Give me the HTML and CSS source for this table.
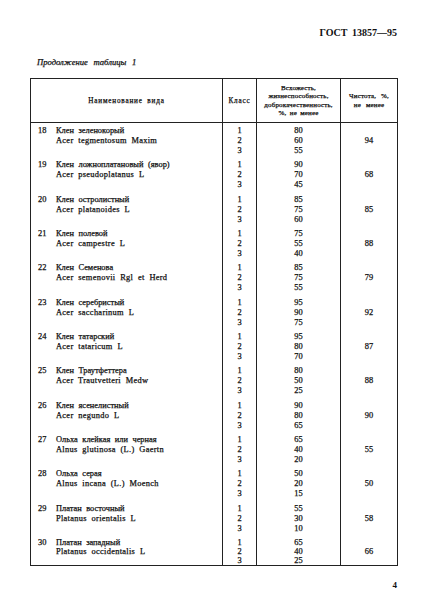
FILE: index.html
```html
<!DOCTYPE html>
<html lang="ru">
<head>
<meta charset="utf-8">
<title>ГОСТ 13857—95</title>
<link rel="stylesheet" href="styles.css">
</head>
<body>
<div class="page">
  <div class="gost">ГОСТ 13857—95</div>
  <div class="caption">Продолжение таблицы 1</div>
  <table class="tbl">
    <colgroup>
      <col class="c-name"><col class="c-cls"><col class="c-val"><col class="c-pur">
    </colgroup>
    <thead>
      <tr>
        <th class="th-wide">Наименование вида</th>
        <th class="th-wide">Класс</th>
        <th class="th-multi">Всхожесть,<br>жизнеспособность,<br>доброкачественность,<br>%, не менее</th>
        <th class="th-multi th-pur">Чистота, %,<br>не менее</th>
      </tr>
    </thead>
    <tbody>
      <tr><td><div class="nm"><span class="no">18</span><span class="names">Клен зеленокорый<br><span class="lat">Acer tegmentosum Maxim</span></span></div></td><td class="ctr">1<br>2<br>3</td><td class="ctr">80<br>60<br>55</td><td class="ctr pur">94</td></tr>
      <tr><td><div class="nm"><span class="no">19</span><span class="names">Клен ложноплатановый (явор)<br><span class="lat">Acer pseudoplatanus L</span></span></div></td><td class="ctr">1<br>2<br>3</td><td class="ctr">90<br>70<br>45</td><td class="ctr pur">68</td></tr>
      <tr><td><div class="nm"><span class="no">20</span><span class="names">Клен остролистный<br><span class="lat">Acer platanoides L</span></span></div></td><td class="ctr">1<br>2<br>3</td><td class="ctr">85<br>75<br>60</td><td class="ctr pur">85</td></tr>
      <tr><td><div class="nm"><span class="no">21</span><span class="names">Клен полевой<br><span class="lat">Acer campestre L</span></span></div></td><td class="ctr">1<br>2<br>3</td><td class="ctr">75<br>55<br>40</td><td class="ctr pur">88</td></tr>
      <tr><td><div class="nm"><span class="no">22</span><span class="names">Клен Семенова<br><span class="lat">Acer semenovii Rgl et Herd</span></span></div></td><td class="ctr">1<br>2<br>3</td><td class="ctr">85<br>75<br>55</td><td class="ctr pur">79</td></tr>
      <tr><td><div class="nm"><span class="no">23</span><span class="names">Клен серебристый<br><span class="lat">Acer saccharinum L</span></span></div></td><td class="ctr">1<br>2<br>3</td><td class="ctr">95<br>90<br>75</td><td class="ctr pur">92</td></tr>
      <tr><td><div class="nm"><span class="no">24</span><span class="names">Клен татарский<br><span class="lat">Acer tataricum L</span></span></div></td><td class="ctr">1<br>2<br>3</td><td class="ctr">95<br>80<br>70</td><td class="ctr pur">87</td></tr>
      <tr><td><div class="nm"><span class="no">25</span><span class="names">Клен Траутфеттера<br><span class="lat">Acer Trautvetteri Medw</span></span></div></td><td class="ctr">1<br>2<br>3</td><td class="ctr">80<br>50<br>25</td><td class="ctr pur">88</td></tr>
      <tr><td><div class="nm"><span class="no">26</span><span class="names">Клен ясенелистный<br><span class="lat">Acer negundo L</span></span></div></td><td class="ctr">1<br>2<br>3</td><td class="ctr">90<br>80<br>65</td><td class="ctr pur">90</td></tr>
      <tr><td><div class="nm"><span class="no">27</span><span class="names">Ольха клейкая или черная<br><span class="lat">Alnus glutinosa (L.) Gaertn</span></span></div></td><td class="ctr">1<br>2<br>3</td><td class="ctr">65<br>40<br>20</td><td class="ctr pur">55</td></tr>
      <tr><td><div class="nm"><span class="no">28</span><span class="names">Ольха серая<br><span class="lat">Alnus incana (L.) Moench</span></span></div></td><td class="ctr">1<br>2<br>3</td><td class="ctr">50<br>20<br>15</td><td class="ctr pur">50</td></tr>
      <tr><td><div class="nm"><span class="no">29</span><span class="names">Платан восточный<br><span class="lat">Platanus orientalis L</span></span></div></td><td class="ctr">1<br>2<br>3</td><td class="ctr">55<br>30<br>10</td><td class="ctr pur">58</td></tr>
      <tr class="last"><td><div class="nm"><span class="no">30</span><span class="names">Платан западный<br><span class="lat">Platanus occidentalis L</span></span></div></td><td class="ctr">1<br>2<br>3</td><td class="ctr">65<br>40<br>25</td><td class="ctr pur">66</td></tr>
    </tbody>
  </table>
  <div class="pageno">4</div>
</div>
</body>
</html>
```

FILE: styles.css
```css
html, body {
  margin: 0;
  padding: 0;
  background: #ffffff;
}

body {
  font-family: "Liberation Serif", "Times New Roman", serif;
  color: #111111;
  -webkit-text-stroke: 0.25px #111111;
}

.page {
  width: 430px;
  height: 608px;
  box-sizing: border-box;
  padding: 27px 33px 0 30px;
  display: flex;
  flex-direction: column;
  overflow: hidden;
}

.gost {
  align-self: flex-end;
  font-size: 10px;
  line-height: 12px;
  font-weight: bold;
  word-spacing: 2px;
  -webkit-text-stroke: 0;
}

.caption {
  margin-top: 17px;
  padding-left: 7px;
  font-size: 8.6px;
  line-height: 12px;
  font-style: italic;
  word-spacing: 3.4px;
}

.tbl {
  margin-top: 10px;
  width: 367px;
  border-collapse: collapse;
  table-layout: fixed;
  font-size: 8.4px;
}

.c-name { width: 192px; }
.c-cls { width: 34px; }
.c-val { width: 84px; }
.c-pur { width: 57px; }

.tbl th {
  height: 43px;
  padding: 0;
  border: 1px solid #222222;
  font-weight: normal;
  text-align: center;
  vertical-align: middle;
}

.tbl th.th-wide {
  font-size: 7.2px;
  letter-spacing: 0.8px;
  word-spacing: 2px;
}

.tbl th.th-multi {
  font-size: 7px;
  line-height: 8.3px;
  letter-spacing: 0.15px;
  word-spacing: 1.5px;
}

.tbl th.th-pur {
  word-spacing: 3px;
}

.tbl td {
  padding: 3px 0 1.33px;
  border-left: 1px solid #222222;
  border-right: 1px solid #222222;
  line-height: 10px;
  vertical-align: top;
}

.tbl tr.last td {
  padding-bottom: 0;
  line-height: 9px;
  border-bottom: 1px solid #222222;
}

.tbl tr.last td.pur {
  padding-top: 12px;
}

.nm {
  display: flex;
  padding-left: 7px;
}

.no {
  width: 18px;
  flex: none;
}

.names {
  word-spacing: 2.4px;
  white-space: nowrap;
}

.lat {
  letter-spacing: 0.3px;
}

.ctr {
  text-align: center;
}

.tbl td.pur {
  padding-top: 13px;
}

.pageno {
  align-self: flex-end;
  margin-top: 13px;
  font-size: 9px;
  line-height: 12px;
  font-weight: bold;
  -webkit-text-stroke: 0;
}
```
